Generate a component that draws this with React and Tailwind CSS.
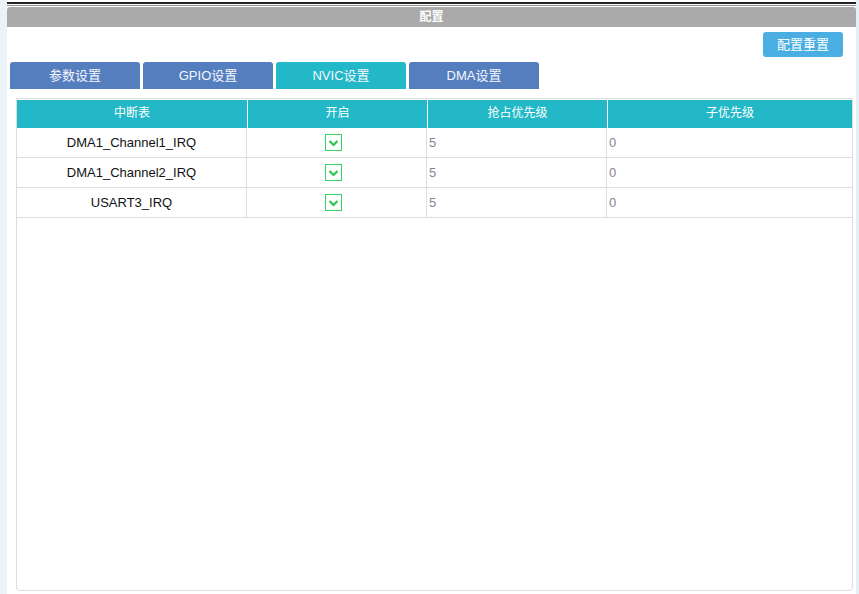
import React from 'react';

const tabs = ['参数设置', 'GPIO设置', 'NVIC设置', 'DMA设置'];
const columns = ['中断表', '开启', '抢占优先级', '子优先级'];
const rows = [
  { name: 'DMA1_Channel1_IRQ', enabled: true, preempt: 5, sub: 0 },
  { name: 'DMA1_Channel2_IRQ', enabled: true, preempt: 5, sub: 0 },
  { name: 'USART3_IRQ', enabled: true, preempt: 5, sub: 0 },
];

const Checkbox = ({ checked }) => (
  <div className="flex h-[17px] w-[17px] items-center justify-center border border-[#36d165] bg-white">
    {checked && (
      <svg width="11" height="8" viewBox="0 0 11 8">
        <path d="M1.5 2 L5.5 6 L9.5 2" fill="none" stroke="#2cc457" strokeWidth="2.2" />
      </svg>
    )}
  </div>
);

const App = () => {
  const active = 2;
  return (
    <div className="flex h-[594px] w-[859px] overflow-hidden bg-[#eaf3f6] font-['Liberation_Sans','Noto_Sans_CJK_SC',sans-serif]">
      <div className="w-[7px] shrink-0" />
      <div className="flex w-[849px] shrink-0 flex-col bg-white">
        <div className="mt-[2px] h-[2px] bg-[#222]" />
        <div className="mt-px h-px bg-[#8c8c8c]" />
        <div className="mt-px h-[20px] rounded-t-[3px] bg-[#aaaaaa] text-center text-[12px] font-bold leading-[20px] text-white">
          配置
        </div>
        <div className="mt-[5px] flex justify-end pr-[13px]">
          <button className="h-[25px] w-[80px] rounded-[3px] bg-[#4aaee3] text-[13px] text-white">配置重置</button>
        </div>
        <div className="mt-[5px] flex gap-[3px] pl-[3px]">
          {tabs.map((t, i) => (
            <div
              key={t}
              className={`h-[27px] w-[130px] rounded-t-[3px] text-center text-[13px] leading-[27px] text-[#f4f6fb] ${
                i === active ? 'bg-[#22b8c7]' : 'bg-[#557ebf]'
              }`}
            >
              {t}
            </div>
          ))}
        </div>
        <div className="ml-[9px] mt-[9px] h-[493px] w-[837px] rounded-b-[4px] border border-[#dddddd] pt-px">
          <div className="grid grid-cols-[230px_180px_180px_245px]">
            {columns.map((c, i) => (
              <div
                key={c}
                className={`h-[28px] bg-[#22b8c7] text-center text-[12px] leading-[27px] text-white ${
                  i > 0 ? 'border-l border-white' : ''
                }`}
              >
                {c}
              </div>
            ))}
            {rows.map((r) => (
              <React.Fragment key={r.name}>
                <div className="flex h-[30px] items-center justify-center border-b border-r border-[#dddddd] text-[13px] text-[#111]">
                  {r.name}
                </div>
                <div className="flex h-[30px] items-center justify-center border-b border-r border-[#dddddd] pr-[6px]">
                  <Checkbox checked={r.enabled} />
                </div>
                <div className="flex h-[30px] items-center border-b border-r border-[#dddddd] pl-[2px] text-[13px] text-[#8a7f96]">
                  {r.preempt}
                </div>
                <div className="flex h-[30px] items-center border-b border-[#dddddd] pl-[2px] text-[13px] text-[#8a7f96]">
                  {r.sub}
                </div>
              </React.Fragment>
            ))}
          </div>
        </div>
      </div>
      <div className="w-[3px] shrink-0 bg-[#e4f0f8]" />
    </div>
  );
};

export default App;
